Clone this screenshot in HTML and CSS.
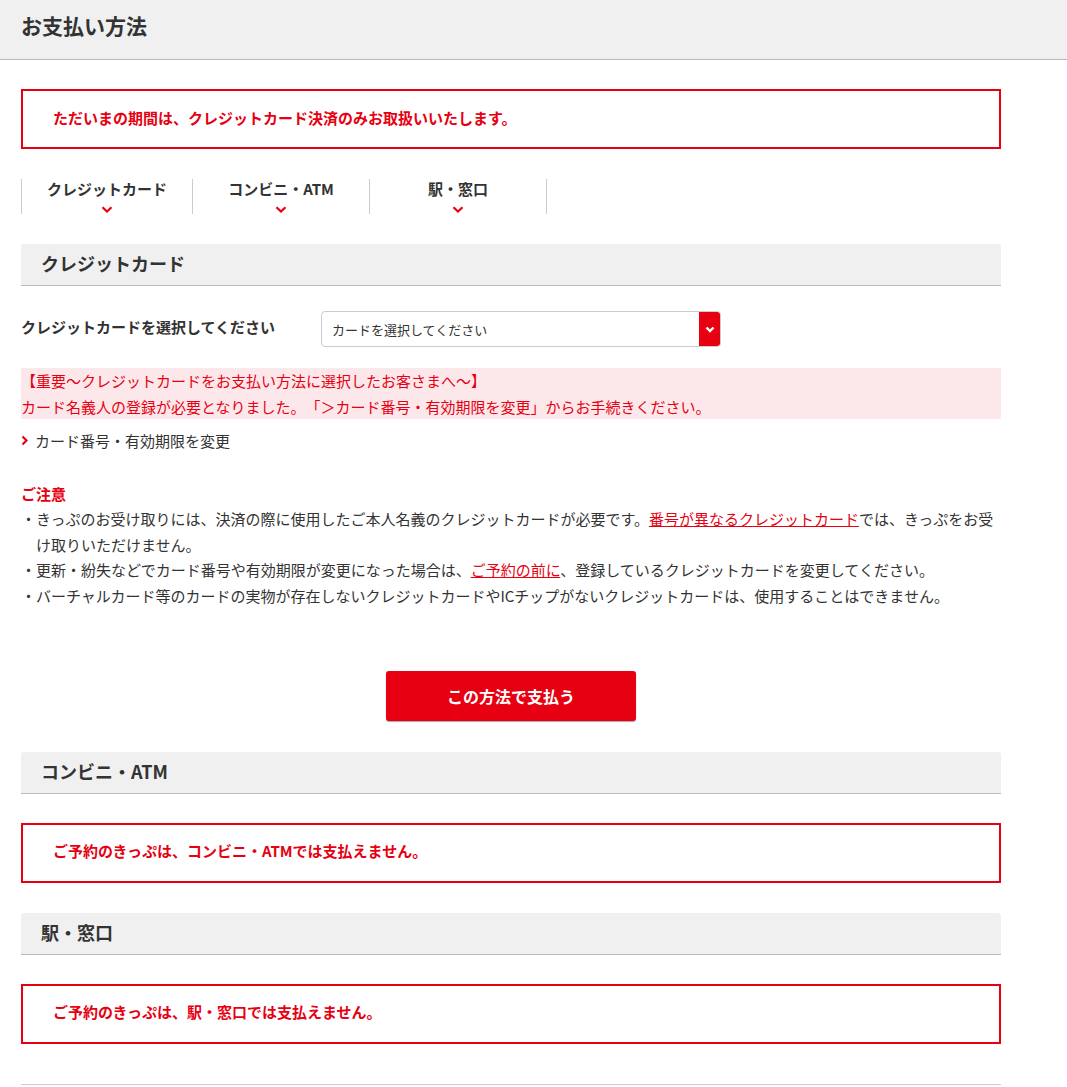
FILE: index.html
```html
<!DOCTYPE html>
<html lang="ja">
<head>
<meta charset="utf-8">
<title>お支払い方法</title>
<link rel="stylesheet" href="styles.css">
</head>
<body>
<header class="page-header">
  <h1 class="page-title">お支払い方法</h1>
</header>
<main class="main">
  <div class="notice notice-top"><p>ただいまの期間は、クレジットカード決済のみお取扱いいたします。</p></div>

  <nav class="tabs">
    <a class="tab" href="#credit"><span class="tab-label">クレジットカード</span>
      <svg class="tab-chev" width="12" height="7" viewBox="0 0 12 7"><polyline points="1.5,1.2 6,5.5 10.5,1.2" fill="none" stroke="#e60012" stroke-width="2.2"/></svg></a>
    <a class="tab" href="#cvs"><span class="tab-label">コンビニ・ATM</span>
      <svg class="tab-chev" width="12" height="7" viewBox="0 0 12 7"><polyline points="1.5,1.2 6,5.5 10.5,1.2" fill="none" stroke="#e60012" stroke-width="2.2"/></svg></a>
    <a class="tab" href="#station"><span class="tab-label">駅・窓口</span>
      <svg class="tab-chev" width="12" height="7" viewBox="0 0 12 7"><polyline points="1.5,1.2 6,5.5 10.5,1.2" fill="none" stroke="#e60012" stroke-width="2.2"/></svg></a>
  </nav>

  <section class="section" id="credit">
    <h2 class="section-title">クレジットカード</h2>
    <div class="form-row">
      <label class="form-label">クレジットカードを選択してください</label>
      <div class="select">
        <span class="select-text">カードを選択してください</span>
        <span class="select-btn"><svg width="10" height="7" viewBox="0 0 10 7"><polyline points="1.5,1.5 5,5 8.5,1.5" fill="none" stroke="#fff" stroke-width="2.4"/></svg></span>
      </div>
    </div>
    <div class="important">
      <p class="important-head">【重要～クレジットカードをお支払い方法に選択したお客さまへ～】</p>
      <p>カード名義人の登録が必要となりました。「＞カード番号・有効期限を変更」からお手続きください。</p>
    </div>
    <a class="change-link" href="#"><svg class="link-chev" width="7" height="11" viewBox="0 0 7 11"><polyline points="1.5,1.5 5.5,5.5 1.5,9.5" fill="none" stroke="#e60012" stroke-width="2.2"/></svg>カード番号・有効期限を変更</a>

    <p class="caution-title">ご注意</p>
    <ul class="caution-list">
      <li>きっぷのお受け取りには、決済の際に使用したご本人名義のクレジットカードが必要です。<a href="#" class="red-link">番号が異なるクレジットカード</a>では、きっぷをお受け取りいただけません。</li>
      <li>更新・紛失などでカード番号や有効期限が変更になった場合は、<a href="#" class="red-link">ご予約の前に</a>、登録しているクレジットカードを変更してください。</li>
      <li>バーチャルカード等のカードの実物が存在しないクレジットカードやICチップがないクレジットカードは、使用することはできません。</li>
    </ul>

    <div class="btn-wrap"><button class="pay-btn" type="button">この方法で支払う</button></div>
  </section>

  <section class="section section-sub" id="cvs">
    <h2 class="section-title">コンビニ・ATM</h2>
    <div class="notice"><p>ご予約のきっぷは、コンビニ・ATMでは支払えません。</p></div>
  </section>

  <section class="section section-sub2" id="station">
    <h2 class="section-title">駅・窓口</h2>
    <div class="notice"><p>ご予約のきっぷは、駅・窓口では支払えません。</p></div>
  </section>

  <hr class="bottom-rule">
</main>
</body>
</html>
```

FILE: styles.css
```css
* { box-sizing: border-box; }
html, body { margin: 0; padding: 0; background: #fff; }
body {
  font-family: "Noto Sans CJK JP", "Noto Sans", sans-serif;
  color: #333;
  font-size: 15px;
  line-height: 1.7;
  text-spacing-trim: space-all;
}
p { margin: 0; }

.page-header {
  height: 60px;
  background: #f0f0f0;
  border-bottom: 1px solid #bbb;
  display: flex;
  align-items: center;
  padding-left: 21px;
}
.page-title {
  margin: 0;
  font-size: 21px;
  font-weight: bold;
  line-height: 1;
  color: #333;
  position: relative;
  top: -4px;
}

.main {
  width: 980px;
  margin-left: 21px;
}

.notice {
  border: 2px solid #e60012;
  height: 60px;
  display: flex;
  align-items: center;
  padding-left: 30px;
  margin-top: 29px;
}
.notice p {
  color: #e60012;
  font-weight: bold;
  font-size: 15px;
  line-height: 1;
  position: relative;
  top: -2px;
}

.tabs {
  display: grid;
  grid-template-columns: 171px 177px 177px;
  width: fit-content;
  margin-top: 30px;
  border-right: 1px solid #ccc;
}
.tab {
  border-left: 1px solid #ccc;
  height: 35px;
  display: flex;
  flex-direction: column;
  align-items: center;
  text-decoration: none;
  color: #333;
}
.tab-label {
  font-weight: bold;
  font-size: 15px;
  line-height: 20px;
}
.tab-chev {
  display: block;
  margin-top: 7px;
}

.section { margin-top: 30px; }
.section-sub { margin-top: 31px; }
.section-sub2 { margin-top: 30px; }
.section-title {
  margin: 0;
  height: 42px;
  background: #f0f0f0;
  border-bottom: 1px solid #bbb;
  border-radius: 3px 3px 0 0;
  padding-left: 20px;
  font-size: 18px;
  font-weight: bold;
  line-height: 39px;
  color: #333;
}

.form-row {
  display: flex;
  align-items: flex-start;
  margin-top: 25px;
}
.form-label {
  width: 300px;
  font-weight: bold;
  font-size: 15px;
  line-height: 25px;
  padding-top: 3px;
}
.select {
  width: 400px;
  height: 36px;
  border: 1px solid #ccc;
  border-radius: 4px;
  display: flex;
  align-items: center;
  justify-content: space-between;
  overflow: hidden;
}
.select-text {
  font-size: 13px;
  padding-left: 10px;
  color: #333;
  line-height: 1;
}
.select-btn {
  width: 22px;
  height: 36px;
  margin: -1px -1px -1px 0;
  background: #e60012;
  display: flex;
  align-items: center;
  justify-content: center;
}
.select-btn svg { display: block; }

.important {
  margin-top: 21px;
  background: #fce8ea;
  color: #e60012;
  font-size: 15px;
  line-height: 25.5px;
}

.change-link {
  display: flex;
  align-items: center;
  margin-top: 9px;
  color: #333;
  text-decoration: none;
  line-height: 25.5px;
}
.link-chev { display: block; margin-right: 7px; }

.caution-title {
  margin-top: 27px;
  color: #e60012;
  font-weight: bold;
  line-height: 25.5px;
}
.caution-list {
  list-style: none;
  margin: 0;
  padding: 0;
}
.caution-list li {
  position: relative;
  padding-left: 15px;
  line-height: 25.7px;
}
.caution-list li::before {
  content: "・";
  position: absolute;
  left: 0;
  top: 0;
}
.red-link {
  color: #e60012;
  text-decoration: underline;
}

.btn-wrap {
  display: flex;
  justify-content: center;
  margin-top: 62px;
}
.pay-btn {
  width: 250px;
  height: 50px;
  border: none;
  border-radius: 3px;
  background: #e60012;
  color: #fff;
  font-family: inherit;
  font-size: 16px;
  font-weight: bold;
  box-shadow: 0 1px 1px rgba(0,0,0,0.35);
  cursor: pointer;
}

.bottom-rule {
  margin: 40px 0 0;
  border: none;
  border-top: 1px solid #ccc;
  height: 0;
}
```
